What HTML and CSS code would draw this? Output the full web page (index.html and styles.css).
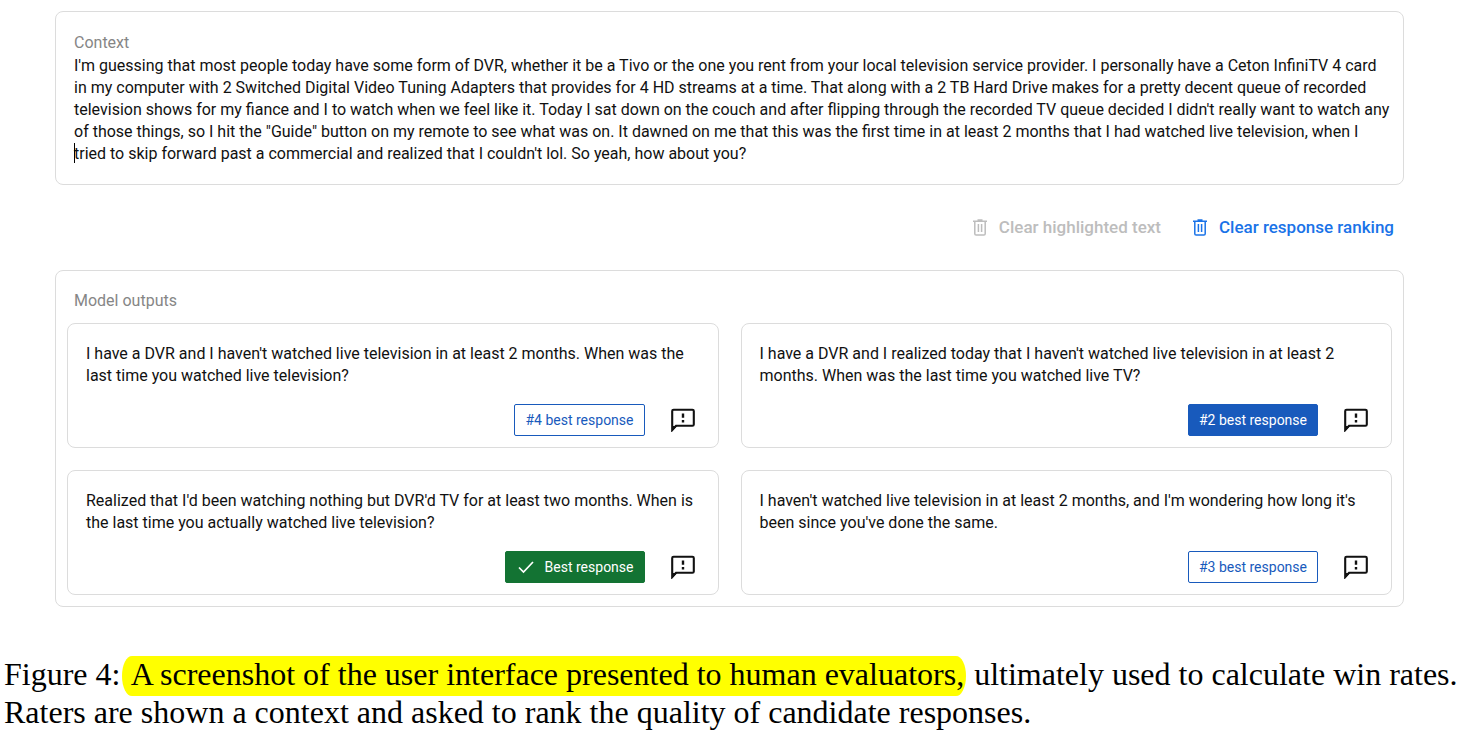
FILE: index.html
```html
<!DOCTYPE html>
<html lang="en">
<head>
<meta charset="utf-8">
<title>Response ranking</title>
<link rel="stylesheet" href="styles.css">
</head>
<body>
<svg class="sprite" aria-hidden="true">
  <symbol id="trash" viewBox="0 0 14 17"><path d="M1.8 3v11.7q0 1.3 1.3 1.3h7.8q1.3 0 1.3-1.3V3M0 2.3h14M4.5 1h5M5.4 5v8M8.6 5v8" fill="none" stroke="currentColor" stroke-width="1.5"/></symbol>
  <symbol id="feedback" viewBox="0 0 24 24"><path d="M1.2 22V3Q1.2 1.7 2.6 1.7h18.8q1.4 0 1.4 1.3v13.4q0 1.4-1.4 1.4H5z" fill="none" stroke="currentColor" stroke-width="2.1"/><path d="M1 18v5.4L6.2 18z" fill="currentColor"/><path d="M12 5.6v4.2M12 12v2.4" stroke="currentColor" stroke-width="2.4"/></symbol>
</svg>
<main class="evaluator">
  <section class="panel context">
    <h2 class="label">Context</h2>
    <p class="text">I'm guessing that most people today have some form of DVR, whether it be a Tivo or the one you rent from your local television service provider. I personally have a Ceton InfiniTV 4 card<br>in my computer with 2 Switched Digital Video Tuning Adapters that provides for 4 HD streams at a time. That along with a 2 TB Hard Drive makes for a pretty decent queue of recorded<br>television shows for my fiance and I to watch when we feel like it. Today I sat down on the couch and after flipping through the recorded TV queue decided I didn't really want to watch any<br>of those things, so I hit the "Guide" button on my remote to see what was on. It dawned on me that this was the first time in at least 2 months that I had watched live television, when I<br><span class="caret"></span>tried to skip forward past a commercial and realized that I couldn't lol. So yeah, how about you?</p>
  </section>
  <div class="actions">
    <button class="action" disabled><svg class="trash"><use href="#trash"/></svg>Clear highlighted text</button>
    <button class="action"><svg class="trash"><use href="#trash"/></svg>Clear response ranking</button>
  </div>
  <section class="panel outputs">
    <h2 class="label">Model outputs</h2>
    <div class="grid">
      <article class="card"><p class="text">I have a DVR and I haven't watched live television in at least 2 months. When was the<br>last time you watched live television?</p>
        <div class="tools"><button class="rank">#4 best response</button><button class="note" aria-label="Feedback"><svg><use href="#feedback"/></svg></button></div></article>
      <article class="card"><p class="text">I have a DVR and I realized today that I haven't watched live television in at least 2<br>months. When was the last time you watched live TV?</p>
        <div class="tools"><button class="rank second">#2 best response</button><button class="note" aria-label="Feedback"><svg><use href="#feedback"/></svg></button></div></article>
      <article class="card"><p class="text">Realized that I'd been watching nothing but DVR'd TV for at least two months. When is<br>the last time you actually watched live television?</p>
        <div class="tools"><button class="rank best"><svg class="check" viewBox="0 0 16 14"><path d="M1 7.5l4.5 4.5L15 2" fill="none" stroke="currentColor" stroke-width="1.7"/></svg>Best response</button><button class="note" aria-label="Feedback"><svg><use href="#feedback"/></svg></button></div></article>
      <article class="card"><p class="text">I haven't watched live television in at least 2 months, and I'm wondering how long it's<br>been since you've done the same.</p>
        <div class="tools"><button class="rank">#3 best response</button><button class="note" aria-label="Feedback"><svg><use href="#feedback"/></svg></button></div></article>
    </div>
  </section>
</main>
<p class="caption">Figure 4:<mark> A screenshot of the user interface presented to human evaluators,</mark> ultimately used to calculate win rates.<br>Raters are shown a context and asked to rank the quality of candidate responses.</p>
</body>
</html>
```

FILE: styles.css
```css
* { box-sizing: border-box; }
body { margin: 0; background: #fff; color: #111; font-family: Roboto, sans-serif; }
.sprite { position: absolute; width: 0; height: 0; }
.evaluator { padding: 11px 70px 0 55px; }
.panel { border: 1px solid #dcdcdc; border-radius: 8px; }
.context { padding: 20px 17px 19px 18px; }
.label { margin: 0 0 1px; color: #868686; font-size: 16px; line-height: 22px; font-weight: 400; }
.text { margin: 0; font-size: 16px; line-height: 22px; white-space: nowrap; }
.caret { position: absolute; width: 1px; height: 20px; background: #000; }
.actions { display: flex; justify-content: flex-end; gap: 32px; padding: 31px 10px 32px; }
.action { display: flex; align-items: center; gap: 12px; padding: 0; border: 0; background: none; color: #1a73e8; font: 500 17px/22px Roboto, sans-serif; }
.action:disabled { color: #bdbdbd; }
.trash { width: 14px; height: 17px; }
.outputs { padding: 19px 11px 11px; }
.outputs .label { padding-left: 7px; margin-bottom: 11px; }
.grid { display: grid; grid-template-columns: 1fr 1fr; gap: 22px; }
.card { border: 1px solid #dcdcdc; border-radius: 8px; padding: 19px 23px 11px 18px; }
.tools { display: flex; justify-content: flex-end; align-items: center; gap: 26px; margin-top: 17px; }
.rank { display: flex; align-items: center; height: 32px; padding: 0 10px; border: 1px solid #185abc; border-radius: 2px; background: #fff; color: #185abc; font: 400 14px/20px Roboto, sans-serif; }
.second { background: #185abc; color: #fff; }
.best { background: #137333; border-color: #137333; color: #fff; }
.check { width: 16px; height: 14px; margin: 0 11px 0 2px; }
.note { padding: 0; border: 0; background: none; color: #111; display: flex; }
.note svg { width: 24px; height: 24px; }
.caption { margin: 48px 4px 0; color: #000; font: 32px/38px "Liberation Serif", serif; white-space: nowrap; }
mark { margin-left: 2px; padding: 0 2px 4px; background: #ff0; border-radius: 10px / 20px; }
```
